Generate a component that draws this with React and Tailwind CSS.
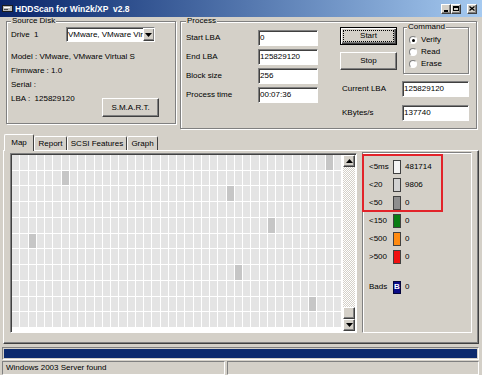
import React from 'react';

// cells that show a slower block on the surface map (row-col)
const SLOW = new Set(['0-38', '1-6', '2-26', '4-31', '5-2', '7-27', '9-36']);

const raised =
  'border border-t-white border-l-white border-r-[#404040] border-b-[#404040] shadow-[inset_-1px_-1px_0_#808080] bg-[#d4d0c8]';
const sunken =
  'border border-t-[#808080] border-l-[#808080] border-r-white border-b-white shadow-[inset_1px_1px_0_#404040] bg-white';

const legendRows = [
  { label: '<5ms', color: 'bg-[#f4f4f4]', value: '481714' },
  { label: '<20', color: 'bg-[#d2d2d2]', value: '9806' },
  { label: '<50', color: 'bg-[#8e8e8e]', value: '0' },
  { label: '<150', color: 'bg-[#0a7d14]', value: '0' },
  { label: '<500', color: 'bg-[#ff8a10]', value: '0' },
  { label: '>500', color: 'bg-[#f01010]', value: '0' },
];

const Arrow = ({ down }) => (
  <svg width="7" height="4" viewBox="0 0 7 4">
    <polygon points={down ? '0,0 7,0 3.5,4' : '0,4 7,4 3.5,0'} fill="#000" />
  </svg>
);

const Field = ({ width, children }) => (
  <div className={`${sunken} h-[16px] flex items-center pl-[1px] ${width}`}>{children}</div>
);

const Radio = ({ checked, label }) => (
  <div className="h-[12px] flex items-center ml-[2px]">
    <span className="w-[8px] h-[8px] rounded-full border border-t-[#808080] border-l-[#808080] border-r-white border-b-white bg-white flex items-center justify-center">
      {checked && <span className="w-[3px] h-[3px] rounded-full bg-black" />}
    </span>
    <span className="ml-[4px]">{label}</span>
  </div>
);

function TitleBar() {
  return (
    <div className="h-[17px] flex items-center bg-linear-to-r from-[#0a246a] to-[#a6caf0] pl-[2px] pr-[5px]">
      <svg width="11" height="9" viewBox="0 0 11 9" className="shrink-0">
        <rect x="0.5" y="1.5" width="10" height="6" fill="#b8b8b8" stroke="#1c1c1c" />
        <rect x="2" y="3" width="6" height="1" fill="#ffffff" />
        <rect x="2" y="5" width="4" height="1" fill="#4a4a4a" />
      </svg>
      <span className="ml-[2px] text-white font-bold text-[8.5px] whitespace-pre">HDDScan for Win2k/XP  v2.8</span>
      <div className="ml-auto flex items-center">
        <div className={`${raised} w-[10px] h-[10px] flex items-end justify-center pb-[1px]`}>
          <span className="w-[4px] h-[2px] bg-black" />
        </div>
        <div className={`${raised} w-[10px] h-[10px] flex items-center justify-center`}>
          <span className="w-[6px] h-[5px] border border-black border-t-2" />
        </div>
        <div className={`${raised} ml-[6px] w-[10px] h-[10px] flex items-center justify-center`}>
          <svg width="6" height="5" viewBox="0 0 6 5">
            <path d="M0.5 0.5 L5.5 4.5 M5.5 0.5 L0.5 4.5" stroke="#000" strokeWidth="1.3" />
          </svg>
        </div>
      </div>
    </div>
  );
}

function SourceDisk() {
  return (
    <fieldset className="ml-[6px] w-[170px] h-[107px] shrink-0 border border-[#808080] shadow-[inset_1px_1px_0_#fff,1px_1px_0_#fff] px-[4px]">
      <legend className="leading-[8px] px-[1px] bg-[#d4d0c8]">Source Disk</legend>
      <div className="mt-[2px] h-[15px] flex items-center">
        <span className="w-[55px] whitespace-pre">Drive  1</span>
        <div className={`${sunken} w-[89px] h-[15px] flex items-center overflow-hidden`}>
          <span className="pl-[1px] flex-1 whitespace-nowrap">VMware, VMware Vir</span>
          <div className={`${raised} w-[12px] h-[13px] shrink-0 flex items-center justify-center`}>
            <Arrow down />
          </div>
        </div>
      </div>
      <div className="mt-[8px] leading-[14px]">
        <div>Model : VMware, VMware Virtual S</div>
        <div>Firmware : 1.0</div>
        <div>Serial :</div>
        <div className="flex items-start">
          <span className="w-[91px] whitespace-pre">LBA :  125829120</span>
          <button className={`${raised} mt-[6px] w-[57px] h-[19px] flex items-center justify-center leading-none`}>
            S.M.A.R.T.
          </button>
        </div>
      </div>
    </fieldset>
  );
}

function Process() {
  const rows = [
    ['Start LBA', '0'],
    ['End LBA', '125829120'],
    ['Block size', '256'],
    ['Process time', '00:07:36'],
  ];
  return (
    <fieldset className="ml-[4px] w-[297px] h-[112px] shrink-0 border border-[#808080] shadow-[inset_1px_1px_0_#fff,1px_1px_0_#fff] pl-[5px]">
      <legend className="leading-[8px] px-[1px] bg-[#d4d0c8]">Process</legend>
      <div className="flex">
        <div className="mt-[5px] w-[132px] flex flex-col gap-[3px]">
          {rows.map(([label, value]) => (
            <div key={label} className="h-[16px] flex items-center">
              <span className="w-[72px]">{label}</span>
              <Field width="w-[60px]">{value}</Field>
            </div>
          ))}
        </div>

        <div className="ml-[22px] flex flex-col">
          <div className="flex">
            <div className="flex flex-col">
              <button className="mt-[2px] w-[57px] h-[18px] border border-black shadow-[inset_1px_1px_0_#fff,inset_-1px_-1px_0_#404040,inset_-2px_-2px_0_#808080] bg-[#d4d0c8] flex items-center justify-center leading-none outline-1 outline-dotted outline-black -outline-offset-4">
                Start
              </button>
              <button className={`${raised} mt-[7px] w-[57px] h-[18px] flex items-center justify-center leading-none`}>
                Stop
              </button>
            </div>
            <fieldset className="ml-[6px] -mt-[2px] w-[66px] h-[51px] border border-[#808080] shadow-[inset_1px_1px_0_#fff,1px_1px_0_#fff] pl-[3px]">
              <legend className="leading-[8px] px-[1px] bg-[#d4d0c8]">Command</legend>
              <div className="pt-[3px]">
                <Radio checked label="Verify" />
                <Radio label="Read" />
                <Radio label="Erase" />
              </div>
            </fieldset>
          </div>
          <div className="mt-[7px] h-[16px] flex items-center">
            <span className="w-[62px] pl-[2px]">Current LBA</span>
            <Field width="w-[67px]">125829120</Field>
          </div>
          <div className="mt-[8px] h-[16px] flex items-center">
            <span className="w-[62px] pl-[2px]">KBytes/s</span>
            <Field width="w-[67px]">137740</Field>
          </div>
        </div>
      </div>
    </fieldset>
  );
}

function Tabs() {
  const other = 'h-[14px] border-t border-l border-r border-t-white border-l-white border-r-[#404040] rounded-t-[2px] flex items-center justify-center';
  return (
    <div className="mt-[5px] h-[16px] flex items-end pl-[4px]">
      <div className="relative z-10 -mb-px h-[17px] w-[30px] bg-[#d4d0c8] border-t border-l border-r border-t-white border-l-white border-r-[#404040] rounded-t-[2px] flex items-center justify-center pb-[1px]">
        Map
      </div>
      <div className={`${other} w-[33px]`}>Report</div>
      <div className={`${other} w-[60px]`}>SCSI Features</div>
      <div className={`${other} w-[31px]`}>Graph</div>
    </div>
  );
}

function SurfaceMap() {
  const cells = [];
  for (let r = 0; r < 11; r++) {
    for (let c = 0; c < 40; c++) {
      cells.push(
        <div key={`${r}-${c}`} className={SLOW.has(`${r}-${c}`) ? 'bg-[#c6c6c6]' : 'bg-[#e4e4e4]'} />
      );
    }
  }
  return (
    <div className="w-[347px] h-[180px] border border-t-[#808080] border-l-[#808080] border-r-white border-b-white shadow-[inset_1px_1px_0_#404040] bg-white p-[1px] flex">
      <div className="w-[329px] h-[172px] grid grid-cols-[repeat(40,minmax(0,1fr))] grid-rows-[repeat(11,minmax(0,1fr))] gap-px">
        {cells}
      </div>
      <div className="ml-[2px] w-[12px] h-[176px] flex flex-col">
        <div className={`${raised} h-[12px] flex items-center justify-center`}>
          <Arrow />
        </div>
        <div className="flex-1 bg-[repeating-conic-gradient(#d4d0c8_0_25%,#ffffff_0_50%)] bg-[length:2px_2px]" />
        <div className={`${raised} h-[12px]`} />
        <div className={`${raised} h-[12px] flex items-center justify-center`}>
          <Arrow down />
        </div>
      </div>
    </div>
  );
}

function Legend() {
  return (
    <div className="relative ml-[5px] -mt-px w-[110px] h-[181px] border border-t-[#808080] border-l-[#808080] border-r-white border-b-white shadow-[inset_1px_1px_0_#fff] pl-[6px] pt-[5px]">
      {legendRows.map((row) => (
        <div key={row.label} className="h-[18px] flex items-center">
          <span className="w-[24px]">{row.label}</span>
          <span className={`w-[8px] h-[14px] border border-[#404040] ${row.color}`} />
          <span className="ml-[4px]">{row.value}</span>
        </div>
      ))}
      <div className="mt-[12px] h-[18px] flex items-center">
        <span className="w-[24px]">Bads</span>
        <span className="w-[8px] h-[13px] bg-[#0b0b86] border border-[#04043a] text-white font-bold text-[8px] leading-none flex items-center justify-center">
          B
        </span>
        <span className="ml-[4px]">0</span>
      </div>
      {/* red highlight drawn over the first three rows */}
      <div className="absolute -left-px top-px w-[81px] h-[58px] border-2 border-[#e2232a]" />
    </div>
  );
}

export default function App() {
  return (
    <div className="w-[482px] h-[375px] overflow-hidden bg-[#d4d0c8] text-black text-[8px] leading-[10px] font-['Liberation_Sans',Arial,sans-serif]">
      <TitleBar />

      <div className="h-[112px] flex">
        <SourceDisk />
        <Process />
      </div>

      <Tabs />

      <div className="ml-[3px] w-[476px] h-[194px] border border-t-white border-l-white border-r-[#404040] border-b-[#404040] shadow-[inset_-1px_-1px_0_#808080] pl-[6px] pt-[2px] flex items-start">
        <SurfaceMap />
        <Legend />
      </div>

      <div className="mt-[3px] ml-[2px] w-[477px] h-[13px] border border-t-[#808080] border-l-[#808080] border-r-white border-b-white p-[1px]">
        <div className="h-full bg-[#0c2a6e]" />
      </div>

      <div className="mt-[1px] ml-[2px] h-[14px] flex gap-[2px]">
        <div className="w-[223px] border border-t-[#808080] border-l-[#808080] border-r-white border-b-white pl-[3px] flex items-center">
          Windows 2003 Server found
        </div>
        <div className="w-[252px] border border-t-[#808080] border-l-[#808080] border-r-white border-b-white" />
      </div>
    </div>
  );
}
